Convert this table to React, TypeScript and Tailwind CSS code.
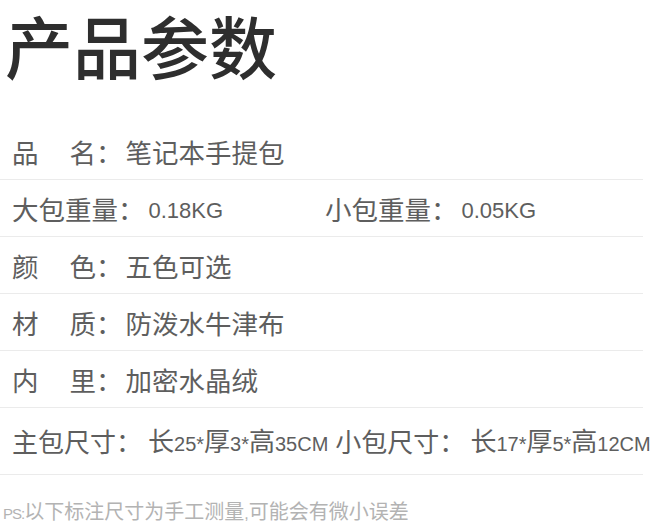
const cjk = "font-['Liberation_Sans','Noto_Sans_CJK_SC',sans-serif]"

function Row({ children, last }: { children: React.ReactNode; last?: boolean }) {
  return (
    <div
      className={`flex items-center whitespace-nowrap border-b border-[#ebebeb] pl-3 leading-[26px] text-[#5e5e5e] ${
        last ? 'pt-[21px] pb-[17px] text-[26px]' : 'pt-[18px] pb-[12px] text-[26.5px]'
      }`}
    >
      {children}
    </div>
  )
}

function Num({ children }: { children: React.ReactNode }) {
  return <span className="text-[20px]">{children}</span>
}

export default function App() {
  return (
    <div className={`h-[528px] w-[659px] overflow-hidden bg-white ${cjk}`}>
      <div className="h-[123px] pt-[16px] pl-[5px]">
        <h1 className="text-[68px] leading-[68px] font-medium text-[#2e2e2e]">产品参数</h1>
      </div>
      <div className="w-[643px]">
        <Row>
          品<span className="ml-[31px]">名：</span>
          <span className="ml-[3px]">笔记本手提包</span>
        </Row>
        <Row>
          <div className="flex w-[313px] items-center">
            大包重量：<span className="ml-1 text-[22px]">0.18KG</span>
          </div>
          <div className="flex items-center">
            小包重量：<span className="ml-1 text-[22px]">0.05KG</span>
          </div>
        </Row>
        <Row>
          颜<span className="ml-[31px]">色：</span>
          <span className="ml-[3px]">五色可选</span>
        </Row>
        <Row>
          材<span className="ml-[31px]">质：</span>
          <span className="ml-[3px]">防泼水牛津布</span>
        </Row>
        <Row>
          内<span className="ml-[31px]">里：</span>
          <span className="ml-[3px]">加密水晶绒</span>
        </Row>
        <Row last>
          主包尺寸：
          <span className="ml-[6px]">
            长<Num>25*</Num>厚<Num>3*</Num>高<Num>35CM</Num>
          </span>
          <span className="ml-[7px]">小包尺寸：</span>
          <span className="ml-[5px]">
            长<Num>17*</Num>厚<Num>5*</Num>高<Num>12CM</Num>
          </span>
        </Row>
      </div>
      <p className="mt-[27px] pl-[3px] text-[20px] leading-[20px] whitespace-nowrap text-[#b3b3b3]">
        <span className="text-[15px] tracking-[-1px]">PS:</span>以下标注尺寸为手工测量<span className="text-[16px]">,</span>可能会有微小误差
      </p>
    </div>
  )
}
